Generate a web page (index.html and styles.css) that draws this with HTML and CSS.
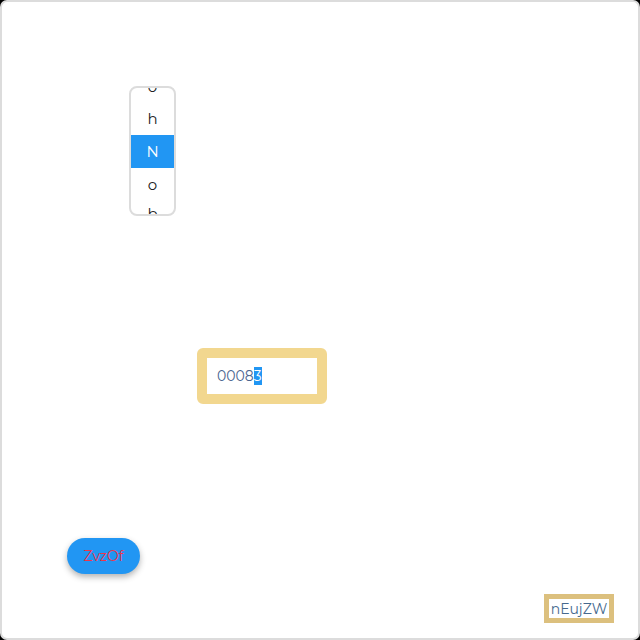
FILE: index.html
```html
<!DOCTYPE html>
<html>
<head>
<meta charset="utf-8">
<link rel="stylesheet" href="styles.css">
</head>
<body>
<div class="frame">
  <div class="listbox">
    <ul class="list">
      <li class="item">o</li>
      <li class="item">h</li>
      <li class="item selected">N</li>
      <li class="item">o</li>
      <li class="item">b</li>
    </ul>
  </div>
  <div class="field">
    <div class="field-inner">0008<span class="sel">3</span></div>
  </div>
  <button class="pill">ZvzOf</button>
  <div class="tag">nEujZW</div>
</div>
</body>
</html>
```
FILE: styles.css
```css
html, body {
  margin: 0;
  padding: 0;
  background: #000;
}
.frame {
  width: 640px;
  height: 640px;
  box-sizing: border-box;
  border: 2px solid #dcdcdc;
  border-radius: 7px;
  background: #fff;
  font-family: Montserrat, "Open Sans", sans-serif;
  overflow: hidden;
}
.listbox {
  margin: 84px 0 0 127px;
  width: 47px;
  height: 130px;
  box-sizing: border-box;
  border: 2px solid #dcdcdc;
  border-radius: 8px;
  overflow: hidden;
}
.list {
  list-style: none;
  margin: -18px 0 0 0;
  padding: 0;
}
.item {
  height: 33px;
  display: flex;
  align-items: center;
  justify-content: center;
  font-size: 15px;
  color: #222;
}
.item:first-child {
  height: 32px;
}
.item:last-child {
  align-items: flex-start;
  padding-top: 3px;
  box-sizing: border-box;
}
.item.selected {
  background: #2196f3;
  color: #fff;
}
.field {
  margin: 132px 0 0 195px;
  width: 130px;
  height: 56px;
  box-sizing: border-box;
  border: 10px solid #f2d78f;
  border-radius: 6px;
  background: #fff;
  display: flex;
  align-items: center;
}
.field-inner {
  padding-left: 10px;
  font-size: 14px;
  color: #4a6590;
}
.sel {
  background: #2196f3;
  color: #fff;
}
.pill {
  display: block;
  margin: 134px 0 0 65px;
  width: 73px;
  height: 36px;
  border: none;
  border-radius: 18px;
  background: #2196f3;
  color: #f0344a;
  font-family: Montserrat, "Open Sans", sans-serif;
  font-size: 14px;
  box-shadow: 0 3px 6px rgba(0,0,0,0.3);
  padding: 0;
}
.tag {
  margin: 20px 0 0 542px;
  width: 70px;
  height: 29px;
  box-sizing: border-box;
  border: 5px solid #dcc07e;
  background: #fff;
  color: #46698e;
  font-size: 14px;
  display: flex;
  align-items: center;
  justify-content: center;
}
```
